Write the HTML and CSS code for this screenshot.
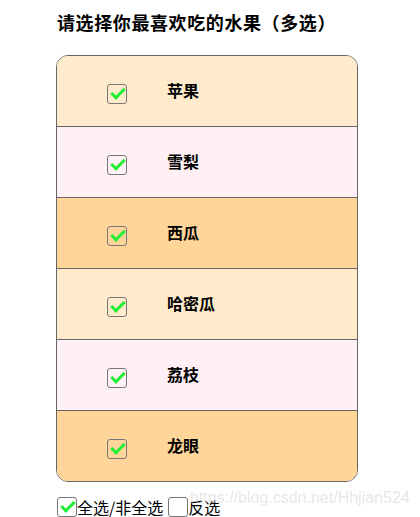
FILE: index.html
```html
<!DOCTYPE html>
<html lang="zh-CN">
<head>
    <meta charset="UTF-8">
    <meta name="viewport" content="width=device-width, initial-scale=1.0">
    <title>水果多选</title>

    <link rel="stylesheet" href="styles.css">
</head>

<body>

<div id="page">
    <h1>请选择你最喜欢吃的水果（多选）</h1>

    <div class="fruit-list">
        <label class="fruit row-a"><input type="checkbox" name="fruit" checked><span>苹果</span></label>
        <label class="fruit row-b"><input type="checkbox" name="fruit" checked><span>雪梨</span></label>
        <label class="fruit row-c"><input type="checkbox" name="fruit" checked><span>西瓜</span></label>
        <label class="fruit row-a"><input type="checkbox" name="fruit" checked><span>哈密瓜</span></label>
        <label class="fruit row-b"><input type="checkbox" name="fruit" checked><span>荔枝</span></label>
        <label class="fruit row-c"><input type="checkbox" name="fruit" checked><span>龙眼</span></label>
    </div>

    <div class="controls">
        <label><input type="checkbox" id="all" checked>全选/非全选</label>
        <label><input type="checkbox" id="invert">反选</label>
    </div>

    <div class="watermark">https://blog.csdn.net/Hhjian524</div>
</div>

</body>
</html>
```

FILE: styles.css
```css
/* page */
body {
    margin: 0;
    font-family: "Noto Sans CJK SC", "Liberation Sans", sans-serif;
    color: #000;
}

#page {
    position: relative;
    padding: 10px 0 0 56px;
}

#page h1 {
    margin: 0 0 0 1px;
    font-size: 18px;
    line-height: 24px;
    font-weight: bold;
    letter-spacing: 0.6px;
    height: 45px;
}

/* the list box */
.fruit-list {
    width: 300px;
    border: 1px solid #666;
    border-radius: 12px;
    overflow: hidden;
}

.fruit {
    display: flex;
    align-items: center;
    height: 70px;
    padding-left: 50px;
    border-top: 1px solid #666;
    font-size: 16px;
    font-weight: bold;
}

.fruit:first-child {
    border-top: none;
}

.fruit span {
    margin-left: 40px;
    margin-top: -3px;
}

.row-a { background-color: #ffebcb; }
.row-b { background-color: #fff0f5; }
.row-c { background-color: #ffd599; }

/* custom checkbox */
input[type="checkbox"] {
    appearance: none;
    -webkit-appearance: none;
    position: relative;
    box-sizing: border-box;
    width: 20px;
    height: 20px;
    margin: 0;
    border: 1px solid #777;
    border-radius: 3px;
    background: transparent;
    flex: none;
}

.fruit input[type="checkbox"] {
    margin-top: 6px;
}

input[type="checkbox"]:checked::after {
    content: "";
    position: absolute;
    left: 3px;
    top: 3px;
    width: 11px;
    height: 5px;
    border-left: 3px solid #22ee33;
    border-bottom: 3px solid #22ee33;
    transform: rotate(-45deg);
}

/* bottom controls */
.controls {
    display: flex;
    margin-top: 13px;
    margin-left: 1px;
    font-size: 16px;
    line-height: 20px;
}

.controls label {
    display: flex;
    align-items: flex-end;
    margin-right: 5px;
}

.controls input[type="checkbox"] {
    margin-top: 2px;
}

.watermark {
    position: absolute;
    left: 190px;
    top: 489px;
    font-family: "Liberation Sans", sans-serif;
    font-size: 16px;
    color: rgba(200, 200, 200, 0.45);
    white-space: nowrap;
}
```
